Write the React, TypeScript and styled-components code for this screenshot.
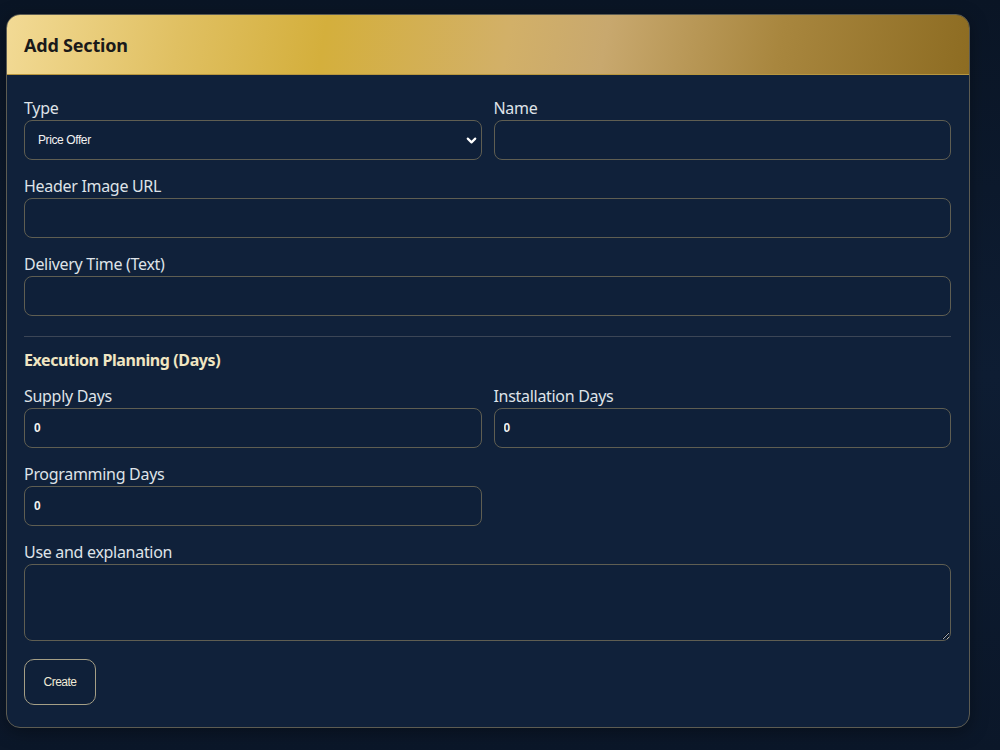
import { FC } from "react";
import styled, { createGlobalStyle } from "styled-components";
import { ChevronDown } from "lucide-react";

const GlobalStyle = createGlobalStyle`
  html, body {
    margin: 0;
    padding: 0;
    height: 100%;
  }
  body {
    background: linear-gradient(180deg, #0a1525 0%, #0e1d33 50%, #0b1729 100%);
    font-family: "Noto Sans", "Open Sans", sans-serif;
  }
`;

const Page = styled.div`
  min-height: 750px;
  box-sizing: border-box;
  padding: 14px 30px 0 6px;
`;

const Card = styled.div`
  background: #10213a;
  border: 1px solid #5d5c52;
  border-radius: 14px;
  overflow: hidden;
  box-shadow: 0 4px 18px rgba(0, 0, 0, 0.35);
`;

const Header = styled.div`
  height: 60px;
  display: flex;
  align-items: center;
  padding: 0 17px;
  box-sizing: border-box;
  background: linear-gradient(100deg, #f2da95 0%, #e0c062 18%, #d4af3c 33%, #d2b068 52%, #c8a86e 62%, #a8863e 80%, #8d6c22 100%);
  border-bottom: 1px solid #b8963e;
`;

const Title = styled.h2`
  margin: 0;
  font-size: 18px;
  font-weight: 700;
  color: #1a1a1a;
  letter-spacing: -0.2px;
`;

const Body = styled.div`
  padding: 23px 18px 22px 17px;
  display: flex;
  flex-direction: column;
  gap: 16px;
`;

const Row = styled.div`
  display: grid;
  grid-template-columns: 1fr 1fr;
  gap: 12px;
`;

const Field = styled.div`
  display: flex;
  flex-direction: column;
  gap: 2px;
`;

const Label = styled.label`
  font-size: 16px;
  line-height: 20px;
  color: #dfe3e8;
  letter-spacing: -0.3px;
`;

const inputBase = `
  box-sizing: border-box;
  width: 100%;
  background: #0f2039;
  border: 1.5px solid #5f5e52;
  border-radius: 8px;
  color: #f2f2f2;
  font-family: "Liberation Sans", Arial, sans-serif;
  font-size: 12px;
  padding: 0 9px;
  outline: none;
`;

const Input = styled.input`
  ${inputBase}
  height: 40px;
  font-weight: 700;
`;

const SelectWrap = styled.div`
  position: relative;
`;

const Select = styled.select`
  ${inputBase}
  height: 40px;
  appearance: none;
  padding-left: 13px;
  letter-spacing: -0.4px;
`;

const Chevron = styled(ChevronDown)`
  position: absolute;
  right: 3px;
  top: 13px;
  color: #ffffff;
  pointer-events: none;
`;

const TextArea = styled.textarea`
  ${inputBase}
  height: 77px;
  padding: 8px 9px;
  resize: vertical;
  display: block;
`;

const Divider = styled.hr`
  margin: 4px 0 -3px;
  border: none;
  border-top: 1px solid #3c4656;
`;

const SectionTitle = styled.h3`
  margin: 0;
  font-size: 16px;
  line-height: 20px;
  font-weight: 700;
  color: #f0e6c2;
  letter-spacing: -0.4px;
`;

const Actions = styled.div`
  padding-top: 2px;
`;

const Button = styled.button`
  width: 72px;
  height: 46px;
  background: #0f2039;
  border: 1.5px solid #a59f86;
  border-radius: 10px;
  color: #f0ead6;
  font-family: "Liberation Sans", Arial, sans-serif;
  font-size: 12px;
  letter-spacing: -0.5px;
  cursor: pointer;
`;

const App: FC = () => {
  return (
    <>
      <GlobalStyle />
      <Page>
        <Card>
          <Header>
            <Title>Add Section</Title>
          </Header>
          <Body>
            <Row>
              <Field>
                <Label>Type</Label>
                <SelectWrap>
                  <Select defaultValue="price">
                    <option value="price">Price Offer</option>
                  </Select>
                  <Chevron size={15} strokeWidth={3.5} />
                </SelectWrap>
              </Field>
              <Field>
                <Label>Name</Label>
                <Input />
              </Field>
            </Row>
            <Field>
              <Label>Header Image URL</Label>
              <Input />
            </Field>
            <Field>
              <Label>Delivery Time (Text)</Label>
              <Input />
            </Field>
            <Divider />
            <SectionTitle>Execution Planning (Days)</SectionTitle>
            <Row>
              <Field>
                <Label>Supply Days</Label>
                <Input defaultValue="0" />
              </Field>
              <Field>
                <Label>Installation Days</Label>
                <Input defaultValue="0" />
              </Field>
            </Row>
            <Row>
              <Field>
                <Label>Programming Days</Label>
                <Input defaultValue="0" />
              </Field>
            </Row>
            <Field>
              <Label>Use and explanation</Label>
              <TextArea />
            </Field>
            <Actions>
              <Button>Create</Button>
            </Actions>
          </Body>
        </Card>
      </Page>
    </>
  );
};

export default App;
